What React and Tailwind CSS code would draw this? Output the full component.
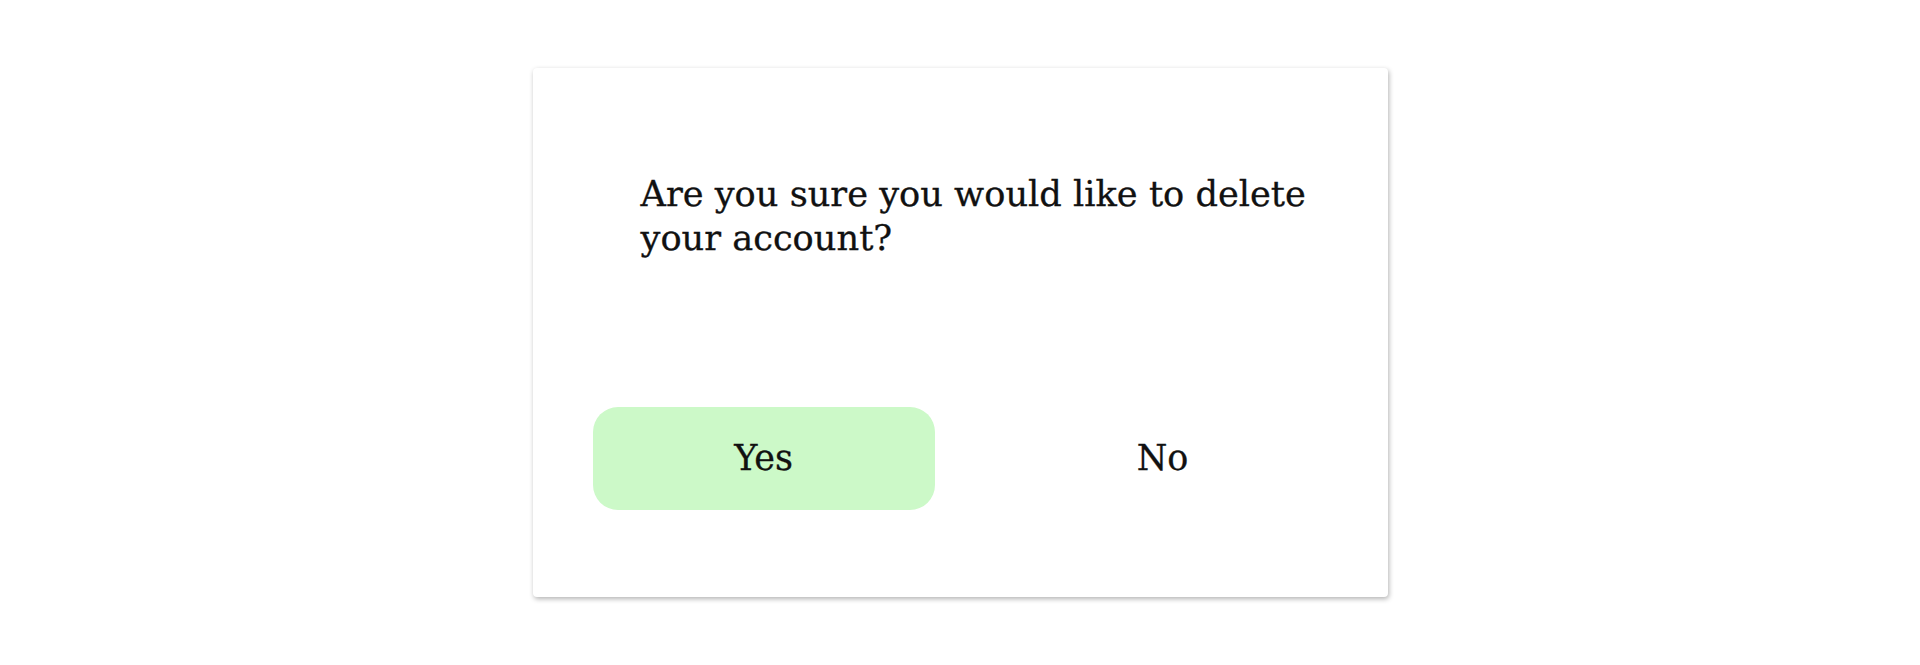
export default function App() {
  const font = { fontFamily: '"DejaVu Serif", serif' };
  return (
    <div className="w-full h-[665px] bg-white flex justify-center pt-[68px]">
      <div className="w-[855px] h-[529px] bg-white rounded-[4px] shadow-[1px_2px_5px_rgba(0,0,0,0.3)] flex flex-col">
        <p
          className="pt-[104px] pl-[108px] w-[800px] text-[35.2px] leading-[44px] text-[#111] [-webkit-text-stroke:0.3px_#111]"
          style={font}
        >
          Are you sure you would like to delete your account?
        </p>
        <div className="mt-auto mb-[87px] pl-[60px] flex gap-[57px]">
          <button
            className="w-[342px] h-[103px] rounded-[25px] bg-[#ccf9c8] text-[35px] text-[#111] [-webkit-text-stroke:0.3px_#111] flex items-center justify-center"
            style={font}
          >
            Yes
          </button>
          <button
            className="w-[342px] h-[103px] rounded-[25px] bg-white text-[35px] text-[#111] [-webkit-text-stroke:0.3px_#111] flex items-center justify-center"
            style={font}
          >
            No
          </button>
        </div>
      </div>
    </div>
  );
}
